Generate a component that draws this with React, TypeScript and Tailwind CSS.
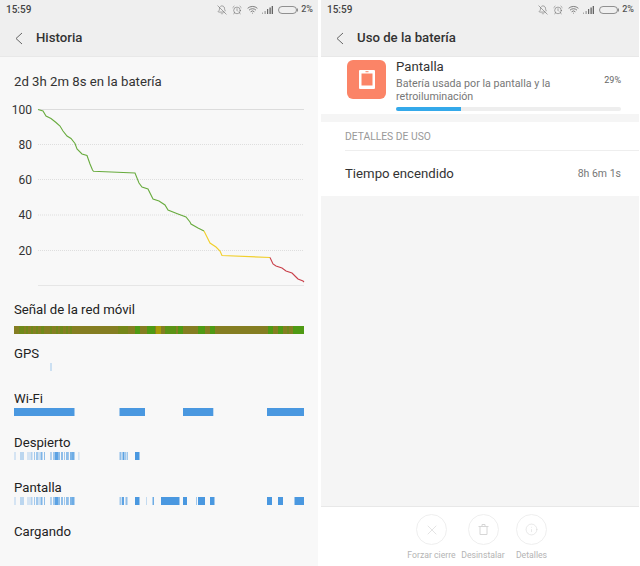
import { AlarmClock, BellOff, Info, Wifi, X } from "lucide-react";

type Seg = [number, number, number];

const curveGreen =
  "38,109.5 43,111 46,116 51,118.5 56,122.5 60,126 63,131 67,136 71,138.5 75,143.5 77,149 82,154 87,155.5 90,164 92.5,170 93.5,171.3 135,173 139,183 142,187 148,189 153,199 159,201 165,205 168,210 178,214 186,217 190,222 191,224 198,228 204,231";
const curveYellow = "204,231 210,243 216,247 220,251 222,255.5 270,257.5";
const curveRed = "270,257.5 273,264 276,266 282,268 286,271 292,273 296,277 298,279 303,281 304,282";

const gridLines = [
  { label: "100", y: 109.5, dotted: false },
  { label: "80", y: 144.5, dotted: true },
  { label: "60", y: 179.5, dotted: true },
  { label: "40", y: 215, dotted: true },
  { label: "20", y: 250.5, dotted: true },
];

const signal: [number, number, string][] = [
  [14, 290, "#857e22"],
  [19, 5, "#6f8a1a"],
  [26, 2, "#6f8a1a"],
  [31, 2, "#6f8a1a"],
  [36, 2, "#6f8a1a"],
  [41, 3, "#6f8a1a"],
  [50, 2, "#6f8a1a"],
  [56, 2, "#6f8a1a"],
  [60, 3, "#6f8a1a"],
  [66, 2, "#6f8a1a"],
  [70, 2, "#6f8a1a"],
  [118, 10, "#758718"],
  [135, 5, "#4f9a14"],
  [147, 8, "#4f9a14"],
  [156, 5, "#a89c08"],
  [165, 11, "#5c9416"],
  [178, 5, "#4f9a14"],
  [198, 7, "#4f9a14"],
  [210, 5, "#4f9a14"],
  [268, 5, "#4f9a14"],
  [278, 5, "#4f9a14"],
  [287, 2, "#6f8a1a"],
  [293, 11, "#4f9a14"],
];

const wifi: Seg[] = [
  [14, 60.5, 1],
  [119.5, 25.5, 1],
  [183, 30, 1],
  [213, 1, 0.3],
  [267, 37, 1],
];

const ticks: Seg[] = [
  [14.5, 1, 0.4],
  [20, 4, 0.35],
  [27.5, 1, 0.4],
  [29.5, 1, 0.4],
  [31, 1.5, 0.4],
  [34, 1, 0.5],
  [36, 2, 0.5],
  [38.5, 1, 0.5],
  [40.5, 2, 0.7],
  [44, 1, 0.6],
  [50, 2, 0.4],
  [53, 2, 0.5],
  [55, 3, 0.9],
  [58, 2, 0.6],
  [61, 2, 0.6],
  [64, 1, 0.5],
  [66, 2, 0.6],
  [68, 1, 0.5],
  [70, 2, 0.7],
  [72, 2.5, 0.8],
];

const awake: Seg[] = [
  ...ticks,
  [78.5, 0.8, 0.4],
  [119.5, 2, 0.6],
  [122.5, 2, 0.9],
  [125, 1.5, 0.5],
  [127, 1, 0.5],
  [135, 4.5, 1],
];

const screen: Seg[] = [
  ...ticks,
  [119.5, 2, 0.5],
  [122, 2, 0.9],
  [125.5, 2, 0.6],
  [135, 4.5, 1],
  [146, 1, 0.3],
  [152.5, 1.5, 0.8],
  [161, 18.5, 1],
  [183, 4, 1],
  [196, 1, 0.5],
  [198, 7, 1],
  [210, 4.5, 1],
  [267, 5, 1],
  [278, 5, 1],
  [294.5, 9.5, 1],
];

function StatusBar() {
  return (
    <div className="flex h-[19px] items-center justify-between pl-[6px] pr-[5px] text-[10px] font-medium text-[#444]">
      <span>15:59</span>
      <div className="flex items-center text-[#555]">
        <BellOff size={10} strokeWidth={1.2} />
        <AlarmClock size={10} strokeWidth={1.2} className="ml-[5px]" />
        <Wifi size={11} strokeWidth={1.6} className="ml-[5px]" />
        <svg width="11" height="8" viewBox="0 0 11 8" className="ml-[4px]">
          <rect x="0" y="6.5" width="1" height="1.5" fill="#aaa" />
          <rect x="2.5" y="5" width="1.2" height="3" fill="#999" />
          <rect x="5" y="3" width="1.2" height="5" fill="#666" />
          <rect x="7.5" y="1.5" width="1.2" height="6.5" fill="#555" />
          <rect x="9.7" y="0" width="1.2" height="8" fill="#555" />
        </svg>
        <svg width="20" height="8" viewBox="0 0 20 8" className="ml-[5px]">
          <rect x="0.5" y="0.5" width="18" height="7" rx="3.5" fill="none" stroke="#777" strokeWidth="0.8" />
          <rect x="18.8" y="2.5" width="1" height="3" fill="#777" />
        </svg>
        <span className="ml-[3px] text-[9px]">2%</span>
      </div>
    </div>
  );
}

function Header({ title }: { title: string }) {
  return (
    <div className="h-[57px] border-b border-[#e8e8e8] bg-[#efefef]">
      <StatusBar />
      <div className="flex h-[38px] items-center pl-[15px]">
        <svg width="8" height="13" viewBox="0 0 8 13" fill="none" stroke="#666" strokeWidth="1">
          <path d="M7 1 1 6.5 7 12" />
        </svg>
        <h1 className="ml-[13px] text-[13.2px] font-medium text-[#333]">{title}</h1>
      </div>
    </div>
  );
}

function Timeline({ segs }: { segs: Seg[] }) {
  return (
    <svg width="318" height="8" className="block">
      {segs.map(([x, w, o], i) => (
        <rect key={i} x={x} y="0" width={w} height="8" fill="#4a98e0" opacity={o} />
      ))}
    </svg>
  );
}

function Row({ label, children }: { label: string; children?: React.ReactNode }) {
  return (
    <div className="h-[44.5px]">
      <p className="h-[18px] pl-[14px] text-[13.2px] leading-[18px] text-[#222]">{label}</p>
      {children}
    </div>
  );
}

function HistoryPanel() {
  return (
    <div className="flex flex-col bg-[#f8f8f8]">
      <Header title="Historia" />
      <p className="mt-[16px] h-[18px] pl-[14px] text-[13.2px] leading-[18px] text-[#333]">
        2d 3h 2m 8s en la batería
      </p>
      <svg width="318" height="200" viewBox="0 91 318 200" className="block">
        {gridLines.map((l) => (
          <g key={l.label}>
            <line
              x1="38"
              x2="304"
              y1={l.y}
              y2={l.y}
              stroke={l.dotted ? "#dedede" : "#dcdcdc"}
              strokeWidth="1"
              strokeDasharray={l.dotted ? "1 1" : undefined}
            />
            <text x="32" y={l.y + 4} textAnchor="end" fontSize="12" fill="#333" fontFamily="Roboto, sans-serif">
              {l.label}
            </text>
          </g>
        ))}
        <line x1="38" x2="304" y1="285.5" y2="285.5" stroke="#e6e6e6" />
        <polyline points={curveGreen} fill="none" stroke="#68ab3e" strokeWidth="1.1" />
        <polyline points={curveYellow} fill="none" stroke="#f1cf2c" strokeWidth="1.1" />
        <polyline points={curveRed} fill="none" stroke="#c9414b" strokeWidth="1.1" />
      </svg>
      <div className="mt-[10px] h-[44px]">
        <p className="h-[18px] pl-[14px] text-[13.2px] leading-[18px] text-[#222]">Señal de la red móvil</p>
        <svg width="318" height="8" className="mt-[6.5px] block">
          {signal.map(([x, w, c], i) => (
            <rect key={i} x={x} y="0" width={w} height="8" fill={c} />
          ))}
        </svg>
      </div>
      <Row label="GPS">
        <Timeline segs={[[50.5, 1, 0.5]]} />
      </Row>
      <Row label="Wi-Fi">
        <Timeline segs={wifi} />
      </Row>
      <Row label="Despierto">
        <Timeline segs={awake} />
      </Row>
      <Row label="Pantalla">
        <Timeline segs={screen} />
      </Row>
      <p className="h-[18px] pl-[14px] text-[13.2px] leading-[18px] text-[#222]">Cargando</p>
    </div>
  );
}

function ActionButton({ label, width, children }: { label: string; width: string; children: React.ReactNode }) {
  return (
    <div className={`flex flex-col items-center ${width}`}>
      <div className="flex h-[31px] w-[31px] items-center justify-center rounded-full border border-[#efefef] text-[#d6d6d6]">
        {children}
      </div>
      <span className="mt-[4px] whitespace-nowrap text-[8.7px] leading-[12px] text-[#b4b4b4]">{label}</span>
    </div>
  );
}

function UsagePanel() {
  return (
    <div className="flex flex-col bg-[#f5f5f5]">
      <Header title="Uso de la batería" />
      <div className="flex h-[57px] bg-white pl-[26px] pr-[18px]">
        <div className="mt-[3px] flex h-[39px] w-[39px] shrink-0 items-center justify-center rounded-[6px] bg-[#fb8467]">
          <svg width="16" height="19" viewBox="0 0 16 19">
            <path fill="#fff" fillRule="evenodd" d="M1 0h14a1 1 0 0 1 1 1v17a1 1 0 0 1-1 1H1a1 1 0 0 1-1-1V1a1 1 0 0 1 1-1Zm1.5 3.5v12h11v-12Z" />
            <rect x="6.5" y="1.2" width="3" height="1" fill="#fb8467" />
          </svg>
        </div>
        <div className="ml-[10px] flex-1">
          <p className="mt-[1px] text-[13.2px] leading-[17px] text-[#333]">Pantalla</p>
          <div className="mt-[2px] flex items-start justify-between">
            <p className="w-[165px] text-[10.7px] leading-[13px] text-[#777]">
              Batería usada por la pantalla y la retroiluminación
            </p>
            <span className="mt-[-3px] text-[9px] leading-[13px] text-[#666]">29%</span>
          </div>
          <div className="mt-[4px] h-[4px] overflow-hidden rounded-full bg-[#eeeeee]">
            <div className="h-full w-[65px] bg-[#34a9ea]" />
          </div>
        </div>
      </div>
      <div className="mt-[8px] bg-white pl-[24px]">
        <p className="h-[28px] text-[10.3px] leading-[29px] text-[#999]">DETALLES DE USO</p>
        <div className="flex h-[46px] items-center justify-between border-t border-[#eeeeee] pr-[18px]">
          <span className="text-[13.2px] text-[#333]">Tiempo encendido</span>
          <span className="text-[10.5px] text-[#777]">8h 6m 1s</span>
        </div>
      </div>
      <div className="flex-1" />
      <div className="flex h-[60px] border-t border-[#e8e8e8] bg-white pl-[83.5px] pt-[7px]">
        <ActionButton label="Forzar cierre" width="w-[54px]">
          <X size={16} strokeWidth={1} />
        </ActionButton>
        <ActionButton label="Desinstalar" width="w-[49px]">
          <svg width="11" height="11" viewBox="0 0 11 11" fill="none" stroke="currentColor" strokeWidth="1">
            <path d="M0.5 2.5h10M2 2.5v8h7v-8M4 2.5v-2h3v2" />
          </svg>
        </ActionButton>
        <ActionButton label="Detalles" width="w-[48px]">
          <Info size={13} strokeWidth={1} />
        </ActionButton>
      </div>
    </div>
  );
}

export default function App() {
  return (
    <div className="grid h-[566px] w-[640px] grid-cols-[318px_318px] grid-rows-[566px] gap-x-[3px] overflow-hidden bg-white font-['Roboto',sans-serif]">
      <HistoryPanel />
      <UsagePanel />
    </div>
  );
}
